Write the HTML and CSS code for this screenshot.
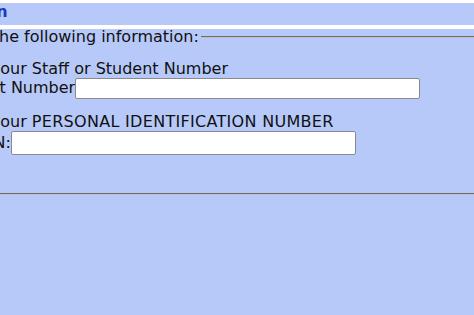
FILE: index.html
```html
<!DOCTYPE html>
<html lang="en">

<head>
    <meta charset="UTF-8">
    <meta name="viewport" content="width=device-width, initial-scale=1.0">
    <title>Staff / Student Login</title>
    <link rel="stylesheet" href="styles.css">
</head>

<body>
    <div class="page">
        <div class="title-bar">
            <span class="title">Login</span>
        </div>

        <form class="login-form" action="#" method="post">
            <fieldset>
                <legend>Please enter the following information:</legend>

                <div class="field">
                    <div class="prompt">Please enter your Staff or Student Number</div>
                    <label for="userId">Staff / Student Number</label><input type="text" id="userId" name="userId">
                </div>

                <div class="field">
                    <div class="prompt">Please enter your <span class="caps">PERSONAL IDENTIFICATION NUMBER</span></div>
                    <label for="pin">Enter your PIN:</label><input type="password" id="pin" name="pin" class="pin-input">
                </div>
            </fieldset>
        </form>
    </div>
</body>

</html>
```

FILE: styles.css
```css
html,
body {
    margin: 0;
    padding: 0;
    background-color: #b7c9f8;
    overflow: hidden;
}

body {
    font-family: "DejaVu Sans", Verdana, sans-serif;
    font-size: 16px;
    color: #111;
}

/* the left side of the page is scrolled out of the window */
.page {
    margin-left: -130px;
    width: 720px;
}

.title-bar {
    border-top: 3px solid #fff;
    border-bottom: 4px solid #fff;
    height: 22px;
    padding-left: 88px;
    line-height: 18px;
}

.title {
    font-weight: bold;
    color: #1c3cb8;
}

fieldset {
    margin: 0 2px;
    padding: 2px 12px 38px;
    border: 2px groove #c0c0c0;
}

legend {
    padding: 0 2px;
    line-height: 15px;
}

.field {
    margin-top: 14px;
}

.prompt {
    line-height: 18px;
}

.caps {
    letter-spacing: 0.3px;
}

.field label {
    margin-left: 4px;
}

.field input {
    width: 345px;
    height: 21px;
    box-sizing: border-box;
    border: 1px solid #8a8a8a;
    border-radius: 2px;
    background-color: #fff;
    font-size: 13px;
    vertical-align: baseline;
}

.field .pin-input {
    height: 24px;
}
```
